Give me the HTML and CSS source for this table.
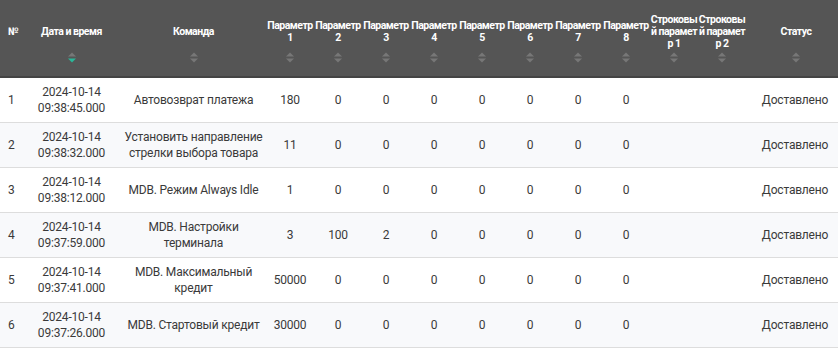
FILE: index.html
```html
<!DOCTYPE html>
<html lang="ru">
<head>
<meta charset="utf-8">
<title>Команды</title>
<link rel="stylesheet" href="styles.css">
</head>
<body>
<table class="grid">
  <colgroup>
    <col class="w-num"><col class="w-date"><col class="w-cmd">
    <col class="w-p"><col class="w-p"><col class="w-p"><col class="w-p">
    <col class="w-p"><col class="w-p"><col class="w-p"><col class="w-p">
    <col class="w-p"><col class="w-p"><col class="w-status">
  </colgroup>
  <thead>
    <tr>
      <th class="c-num"><div class="th-inner"><span class="th-label">№</span><span class="sort-space"></span></div></th>
      <th><div class="th-inner"><span class="th-label">Дата и время</span><svg class="sort" viewBox="0 0 8 11"><polygon class="up" points="0,4.5 4,0.5 8,4.5"/><polygon class="dn active" points="0,6.5 8,6.5 4,10.5"/></svg></div></th>
      <th class="c-cmd"><div class="th-inner"><span class="th-label">Команда</span><svg class="sort" viewBox="0 0 8 11"><polygon class="up" points="0,4.5 4,0.5 8,4.5"/><polygon class="dn" points="0,6.5 8,6.5 4,10.5"/></svg></div></th>
      <th><div class="th-inner"><span class="th-label">Параметр 1</span><svg class="sort" viewBox="0 0 8 11"><polygon class="up" points="0,4.5 4,0.5 8,4.5"/><polygon class="dn" points="0,6.5 8,6.5 4,10.5"/></svg></div></th>
      <th><div class="th-inner"><span class="th-label">Параметр 2</span><svg class="sort" viewBox="0 0 8 11"><polygon class="up" points="0,4.5 4,0.5 8,4.5"/><polygon class="dn" points="0,6.5 8,6.5 4,10.5"/></svg></div></th>
      <th><div class="th-inner"><span class="th-label">Параметр 3</span><svg class="sort" viewBox="0 0 8 11"><polygon class="up" points="0,4.5 4,0.5 8,4.5"/><polygon class="dn" points="0,6.5 8,6.5 4,10.5"/></svg></div></th>
      <th><div class="th-inner"><span class="th-label">Параметр 4</span><svg class="sort" viewBox="0 0 8 11"><polygon class="up" points="0,4.5 4,0.5 8,4.5"/><polygon class="dn" points="0,6.5 8,6.5 4,10.5"/></svg></div></th>
      <th><div class="th-inner"><span class="th-label">Параметр 5</span><svg class="sort" viewBox="0 0 8 11"><polygon class="up" points="0,4.5 4,0.5 8,4.5"/><polygon class="dn" points="0,6.5 8,6.5 4,10.5"/></svg></div></th>
      <th><div class="th-inner"><span class="th-label">Параметр 6</span><svg class="sort" viewBox="0 0 8 11"><polygon class="up" points="0,4.5 4,0.5 8,4.5"/><polygon class="dn" points="0,6.5 8,6.5 4,10.5"/></svg></div></th>
      <th><div class="th-inner"><span class="th-label">Параметр 7</span><svg class="sort" viewBox="0 0 8 11"><polygon class="up" points="0,4.5 4,0.5 8,4.5"/><polygon class="dn" points="0,6.5 8,6.5 4,10.5"/></svg></div></th>
      <th><div class="th-inner"><span class="th-label">Параметр 8</span><svg class="sort" viewBox="0 0 8 11"><polygon class="up" points="0,4.5 4,0.5 8,4.5"/><polygon class="dn" points="0,6.5 8,6.5 4,10.5"/></svg></div></th>
      <th><div class="th-inner"><span class="th-label th-break">Строковый параметр 1</span><svg class="sort" viewBox="0 0 8 11"><polygon class="up" points="0,4.5 4,0.5 8,4.5"/><polygon class="dn" points="0,6.5 8,6.5 4,10.5"/></svg></div></th>
      <th><div class="th-inner"><span class="th-label th-break">Строковый параметр 2</span><svg class="sort" viewBox="0 0 8 11"><polygon class="up" points="0,4.5 4,0.5 8,4.5"/><polygon class="dn" points="0,6.5 8,6.5 4,10.5"/></svg></div></th>
      <th class="c-status"><div class="th-inner"><span class="th-label">Статус</span><svg class="sort" viewBox="0 0 8 11"><polygon class="up" points="0,4.5 4,0.5 8,4.5"/><polygon class="dn" points="0,6.5 8,6.5 4,10.5"/></svg></div></th>
    </tr>
  </thead>
  <tbody>
    <tr>
      <td class="c-num">1</td><td class="c-date">2024-10-14 09:38:45.000</td><td class="c-cmd">Автовозврат платежа</td>
      <td>180</td><td>0</td><td>0</td><td>0</td><td>0</td><td>0</td><td>0</td><td>0</td><td></td><td></td><td class="c-status">Доставлено</td>
    </tr>
    <tr>
      <td class="c-num">2</td><td class="c-date">2024-10-14 09:38:32.000</td><td class="c-cmd">Установить направление стрелки выбора товара</td>
      <td>11</td><td>0</td><td>0</td><td>0</td><td>0</td><td>0</td><td>0</td><td>0</td><td></td><td></td><td class="c-status">Доставлено</td>
    </tr>
    <tr>
      <td class="c-num">3</td><td class="c-date">2024-10-14 09:38:12.000</td><td class="c-cmd">MDB. Режим Always Idle</td>
      <td>1</td><td>0</td><td>0</td><td>0</td><td>0</td><td>0</td><td>0</td><td>0</td><td></td><td></td><td class="c-status">Доставлено</td>
    </tr>
    <tr>
      <td class="c-num">4</td><td class="c-date">2024-10-14 09:37:59.000</td><td class="c-cmd">MDB. Настройки терминала</td>
      <td>3</td><td>100</td><td>2</td><td>0</td><td>0</td><td>0</td><td>0</td><td>0</td><td></td><td></td><td class="c-status">Доставлено</td>
    </tr>
    <tr>
      <td class="c-num">5</td><td class="c-date">2024-10-14 09:37:41.000</td><td class="c-cmd">MDB. Максимальный кредит</td>
      <td>50000</td><td>0</td><td>0</td><td>0</td><td>0</td><td>0</td><td>0</td><td>0</td><td></td><td></td><td class="c-status">Доставлено</td>
    </tr>
    <tr>
      <td class="c-num">6</td><td class="c-date">2024-10-14 09:37:26.000</td><td class="c-cmd">MDB. Стартовый кредит</td>
      <td>30000</td><td>0</td><td>0</td><td>0</td><td>0</td><td>0</td><td>0</td><td>0</td><td></td><td></td><td class="c-status">Доставлено</td>
    </tr>
  </tbody>
</table>
</body>
</html>
```

FILE: styles.css
```css
html, body {
  margin: 0;
  padding: 0;
  background: #ffffff;
}

body {
  font-family: Roboto, "Noto Sans", sans-serif;
}

.grid {
  width: 838px;
  border-collapse: collapse;
  table-layout: fixed;
}

.w-num { width: 28px; }
.w-date { width: 87px; }
.w-cmd { width: 151px; }
.w-p { width: 48px; }
.w-status { width: 92px; }

.grid th {
  background: #555555;
  color: #ffffff;
  font-weight: 700;
  font-size: 10.5px;
  letter-spacing: -0.5px;
  line-height: 12px;
  padding: 0;
  text-align: center;
  border-bottom: 2px solid #444444;
  vertical-align: top;
}

.th-inner {
  height: 76px;
  box-sizing: border-box;
  padding: 13px 0 0;
  display: flex;
  flex-direction: column;
  align-items: center;
}

.th-label {
  flex: 1;
  display: flex;
  align-items: center;
  justify-content: center;
  width: 100%;
}

.th-break {
  word-break: break-all;
}

.grid th.c-num .th-inner {
  align-items: flex-start;
  padding-left: 8px;
}

.grid th.c-num .th-label {
  justify-content: flex-start;
}

.grid th.c-cmd .th-inner {
  padding-left: 6px;
}

.grid th.c-status .th-inner {
  padding-left: 8px;
}

.sort-space,
.sort {
  display: block;
  width: 8px;
  height: 11px;
  margin: 2px 0 13px;
  flex: none;
}

.sort .up,
.sort .dn {
  fill: #777777;
}

.sort .dn.active {
  fill: #2bb79a;
}

.grid td {
  height: 44px;
  padding: 0 2px;
  font-size: 12px;
  letter-spacing: -0.2px;
  line-height: 16px;
  color: #3a3a3a;
  text-align: center;
  vertical-align: middle;
  border-bottom: 1px solid #dddddd;
}

.grid tbody tr:nth-child(even) td {
  background: #f8f9fb;
}

.grid td.c-num {
  text-align: left;
  padding-left: 8px;
}

.grid td.c-date {
  padding: 0 4px;
}

.grid td.c-cmd {
  padding: 0 2px 0 8px;
}

.grid td.c-status {
  padding-left: 8px;
}
```
